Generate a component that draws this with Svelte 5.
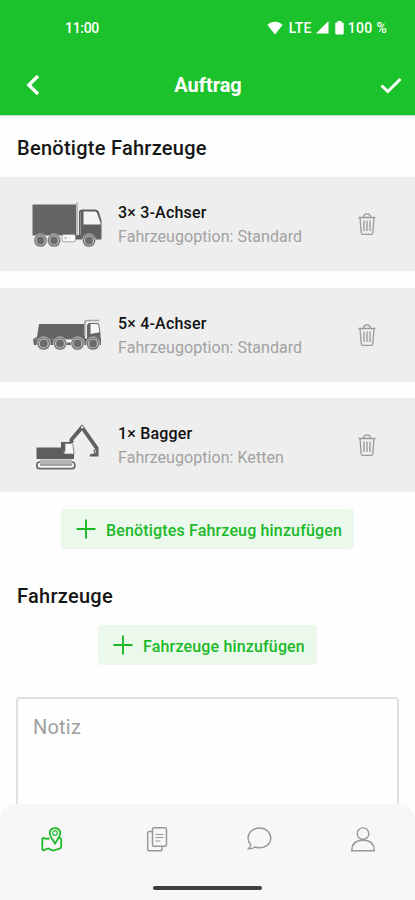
<script lang="ts">
	interface Vehicle {
		kind: 'truck' | 'dumper' | 'digger';
		count: number;
		name: string;
		option: string;
	}

	let vehicles: Vehicle[] = $state([
		{ kind: 'truck', count: 3, name: '3-Achser', option: 'Standard' },
		{ kind: 'dumper', count: 5, name: '4-Achser', option: 'Standard' },
		{ kind: 'digger', count: 1, name: 'Bagger', option: 'Ketten' }
	]);
	let note = $state('');

	function removeVehicle(index: number) {
		vehicles = vehicles.filter((_, i) => i !== index);
	}
</script>

{#snippet wheel(x: number, y: number)}
	<circle cx={x} cy={y} r="6.6" fill="#6b6b6b" stroke="#e4e4e4" stroke-width="0.7" />
	<circle cx={x} cy={y} r="4.5" fill="#6b6b6b" stroke="#c4c4c4" stroke-width="1.2" />
{/snippet}

{#snippet plus()}
	<svg width="20" height="20" viewBox="0 0 20 20">
		<path d="M10 .5v19M.5 10h19" stroke="#1bb927" stroke-width="1.9" />
	</svg>
{/snippet}

<div class="screen">
	<header>
		<div class="status">
			<span class="time">11:00</span>
			<svg class="wifi" width="16" height="14" viewBox="0 0 16 14">
				<path d="M8 13.5.5 4C4.500-.2 11.500-.2 15.500 4Z" fill="#fff" />
			</svg>
			<span class="lte">LTE</span>
			<svg class="signal" width="13" height="13" viewBox="0 0 13 13">
				<path d="M12.500 0v12.500H0Z" fill="#fff" />
			</svg>
			<svg class="battery" width="9" height="14" viewBox="0 0 9 14">
				<path d="M2.500 0h4v1.500H8q.7 0 .7.800v10.200q0 1-1 1H1.300q-1 0-1-1V2.300q0-.8.7-.8h1.500Z" fill="#fff" />
			</svg>
			<span class="percent">100 %</span>
		</div>
		<div class="bar">
			<button aria-label="Zurück">
				<svg width="14" height="22" viewBox="0 0 14 22">
					<path d="M12 2 2.800 11l9.200 9" fill="none" stroke="#fff" stroke-width="3.300" />
				</svg>
			</button>
			<h1>Auftrag</h1>
			<button aria-label="Speichern">
				<svg width="22" height="17" viewBox="0 0 22 17">
					<path d="m1.500 8.500 6.300 6L20.500 2" fill="none" stroke="#fff" stroke-width="3" />
				</svg>
			</button>
		</div>
	</header>

	<main>
		<h2 class="needed">Benötigte Fahrzeuge</h2>
		<ul>
			{#each vehicles as vehicle, index}
				<li>
					<svg class="vehicle" width="76" height="55" viewBox="10 5 76 55">
						{#if vehicle.kind === 'truck'}
							<path d="M12.500 13.500H56v31H12.500Z" fill="#646464" />
							<path d="M57 11.500V45" stroke="#aaa" stroke-width="1.500" />
							<path d="M59 20q1-1.500 3-1.500h13q3 0 4 3l2.500 8V48.500H54V44h5Z" fill="#606060" />
							<path d="M63.500 20.500H75q1.500 0 2 1.500l3.500 10v1.500h-17Z" fill="#f5f5f5" />
							<path d="M60.500 21v23" stroke="#909090" stroke-width="1" />
							<rect x="42" y="43.500" width="13.500" height="7.300" rx="1.800" fill="#f7f7f7" stroke="#909090" stroke-width=".8" />
							<path d="M44.500 47h2" stroke="#777" />
							{@render wheel(20.5, 49.5)}
							{@render wheel(34, 49.5)}
							{@render wheel(69, 49.5)}
						{:else if vehicle.kind === 'dumper'}
							<path d="M19 23h46v14.500l16-.5v7H14l-1-6 4-2Z" fill="#646464" />
							<path d="M13 38.300h52" stroke="#929292" stroke-width=".8" />
							<path d="M64.800 35V22q0-2.500 2.500-2.500h12" fill="none" stroke="#a3a3a3" stroke-width="1.600" />
							<path d="M69 22h8.500q1.300 0 1.600 1.500L80.500 32v7H67V24Z" fill="#656565" />
							<path d="M70.500 23h6.500q1 0 1.300 1.300l1.200 7-9 1.700Z" fill="#f6f6f6" />
							<path d="M44.500 38.500h8l-2 3h-5Z" fill="#f4f4f4" />
							{@render wheel(23.7, 42.5)}
							{@render wheel(40, 42.5)}
							{@render wheel(57.5, 42.5)}
							{@render wheel(73, 42.5)}
						{:else}
							<path d="M16.500 35.500H41v-5.500h10l3 7v10H16.500Z" fill="#5e5e5e" />
							<path d="M45 31.500h6.500q1.500 0 1.500 2l1.200 8.500h-9.700l-1-2.500h1.500Z" fill="#f7f7f7" stroke="#777" stroke-width=".8" />
							<path d="m49.500 31 0-4 11-13q1.500-2.500 3 0L78.500 35.500v9H69.500l.8-2.500 3.700-.2-.5-3 1.500-1.800L62 18.500 53.500 28v3Z" fill="#606060" />
							<circle cx="62.200" cy="15.200" r="1.200" fill="#eee" />
							<path d="m76 38-1 3" stroke="#eee" stroke-width=".8" />
							<rect x="16.800" y="50" width="38" height="6.700" rx="3" fill="#f4f4f4" stroke="#686868" stroke-width="1.700" />
							<path d="M20 47.500v5h32v-5Z" fill="#b4b4b4" />
							<path d="M20 53h32" stroke="#666" stroke-width="1" />
						{/if}
					</svg>
					<div class="info">
						<strong>{vehicle.count}× {vehicle.name}</strong>
						<span>Fahrzeugoption: {vehicle.option}</span>
					</div>
					<button class="trash" aria-label="Löschen" onclick={() => removeVehicle(index)}>
						<svg width="18" height="22" viewBox="0 0 18 22" fill="none" stroke="#999" stroke-width="1.300">
							<path d="M.5 4.500h17M5.500 4.300q.3-3.500 3.500-3.500t3.500 3.500M2 4.800l1.200 15q.1 1.500 1.500 1.500h8.600q1.400 0 1.500-1.500L16 4.800" />
							<path d="M6 7.500v10.500M9 7.500v10.500M12 7.500v10.500" />
						</svg>
					</button>
				</li>
			{/each}
		</ul>
		<button class="add">{@render plus()}<span>Benötigtes Fahrzeug hinzufügen</span></button>

		<h2 class="assigned">Fahrzeuge</h2>
		<button class="add short">{@render plus()}<span>Fahrzeuge hinzufügen</span></button>

		<textarea placeholder="Notiz" bind:value={note}></textarea>
	</main>

	<nav>
		<div class="tabs">
			<button aria-label="Karte">
				<svg width="26" height="28" viewBox="0 0 26 28" fill="none" stroke="#1fba2b" stroke-width="1.800">
					<path d="M10.500 13.500 7 13.800 4.500 13q-1.200 0-1.200 1.200v10.300l1 1 4.700-2 5 2 6-1.700q2.200-.3 2.200-2v-7q0-2-2-1.800l-1.500.5" />
					<path d="M16 18.500 12.500 13q-2-3-1.700-5.500.7-4.300 5.200-4.300t5.200 4.300q.3 2.500-1.700 5.500Z" />
					<circle cx="16" cy="8" r="2.300" stroke-width="1.200" />
				</svg>
			</button>
			<button aria-label="Dokumente">
				<svg width="26" height="28" viewBox="0 0 26 28" fill="none" stroke="#999" stroke-width="1.500">
					<rect x="9.500" y="2.800" width="14" height="18.500" rx="1.500" />
					<path d="M9.500 6.500h-3Q4.700 6.500 4.700 8v16q0 1.800 1.800 1.800h10.500q2 0 2-1.800v-2.700" />
					<path d="M12.500 9.500h8M12.500 12.500h8M12.500 16h5" stroke-width="1.100" />
				</svg>
			</button>
			<button aria-label="Nachrichten">
				<svg width="26" height="28" viewBox="0 0 26 28" fill="none" stroke="#999" stroke-width="1.400">
					<path d="M13.500 3C7 3 2 7.500 2 13q0 3.700 2.700 6.500.3 2-2.200 4.300 4 .2 6.500-1.800 2 .8 4.500.8c6.500 0 11.300-4.300 11.300-9.800S20 3 13.500 3Z" />
				</svg>
			</button>
			<button aria-label="Profil">
				<svg width="26" height="28" viewBox="0 0 26 28" fill="none" stroke="#999" stroke-width="1.400">
					<circle cx="13" cy="8.700" r="5.800" />
					<path d="M1.800 25.700q0-10.500 11.200-10.500t11.200 10.500Z" />
				</svg>
			</button>
		</div>
		<div class="home"></div>
	</nav>
</div>

<style>
	:global(body) {
		margin: 0;
		background: #fff;
	}
	.screen {
		width: 415px;
		height: 900px;
		display: flex;
		flex-direction: column;
		overflow: hidden;
		background: #fefefe;
		font-family: Roboto, 'Liberation Sans', sans-serif;
	}
	button {
		border: none;
		background: none;
		padding: 0;
		font-family: inherit;
		cursor: pointer;
	}
	svg {
		display: block;
		flex-shrink: 0;
	}
	header {
		height: 115px;
		flex-shrink: 0;
		background: #1cc22b;
		box-shadow: 0 1px 1px rgba(0, 80, 0, 0.2);
		color: #fff;
	}
	.status {
		height: 55px;
		box-sizing: border-box;
		padding: 0 28px 0 65px;
		display: flex;
		align-items: center;
		font-size: 14px;
		font-weight: 500;
	}
	.time {
		margin-right: auto;
		letter-spacing: -0.3px;
	}
	.lte {
		margin: 0 4px 0 6px;
		letter-spacing: 0.3px;
	}
	.signal {
		margin-right: 6px;
	}
	.battery {
		margin-right: 4px;
	}
	.percent {
		letter-spacing: 0.3px;
	}
	.bar {
		height: 60px;
		padding: 0 13px 0 26px;
		display: grid;
		grid-template-columns: 14px 1fr 22px;
		align-items: center;
	}
	h1 {
		margin: 0 4px 0 0;
		text-align: center;
		font-size: 20px;
		font-weight: 700;
	}
	main {
		flex: 1;
		min-height: 0;
		overflow: hidden;
		display: flex;
		flex-direction: column;
	}
	h2 {
		margin: 0 17px;
		font-size: 20px;
		line-height: 24px;
		font-weight: 500;
		letter-spacing: 0.27px;
		color: #161616;
	}
	.needed {
		margin-top: 21px;
	}
	ul {
		list-style: none;
		margin: 17px 0 0;
		padding: 0;
		display: flex;
		flex-direction: column;
		gap: 16.5px;
	}
	li {
		height: 94px;
		flex-shrink: 0;
		box-sizing: border-box;
		padding: 0 39px 0 30px;
		display: flex;
		align-items: center;
		background: #eee;
	}
	.vehicle {
		margin-top: -2px;
	}
	.info {
		flex: 1;
		margin: 2px 0 0 12px;
		display: flex;
		flex-direction: column;
		font-size: 16px;
		line-height: 24px;
		letter-spacing: 0.05px;
		color: #a2a2a2;
	}
	.info strong {
		font-weight: 500;
		letter-spacing: 0.2px;
		color: #111;
	}
	.add {
		align-self: center;
		flex-shrink: 0;
		height: 40px;
		margin-top: 17px;
		padding: 0 12px 0 15px;
		display: flex;
		align-items: center;
		gap: 10px;
		border-radius: 3px;
		background: #ebf9ec;
		color: #1bb927;
		font-size: 16px;
		font-weight: 500;
		letter-spacing: 0.16px;
	}
	.add span {
		padding-top: 2px;
	}
	.assigned {
		margin-top: 35px;
	}
	textarea {
		height: 150px;
		flex-shrink: 0;
		box-sizing: border-box;
		margin: 32px 16px 0;
		padding: 16px 15px;
		border: 2px solid #e0e0e0;
		border-radius: 4px;
		background: #fefefe;
		font-family: inherit;
		font-size: 20px;
		line-height: 24px;
		letter-spacing: 0.2px;
		resize: none;
	}
	textarea::placeholder {
		color: #a0a0a0;
	}
	nav {
		height: 96px;
		flex-shrink: 0;
		border-radius: 16px 16px 0 0;
		background: #f7f7f7;
	}
	.tabs {
		height: 70px;
		display: grid;
		grid-template-columns: repeat(4, 1fr);
		justify-items: center;
		align-items: center;
	}
	.home {
		width: 109px;
		height: 4px;
		margin: 12px auto 0;
		border-radius: 2px;
		background: #404040;
	}
</style>
